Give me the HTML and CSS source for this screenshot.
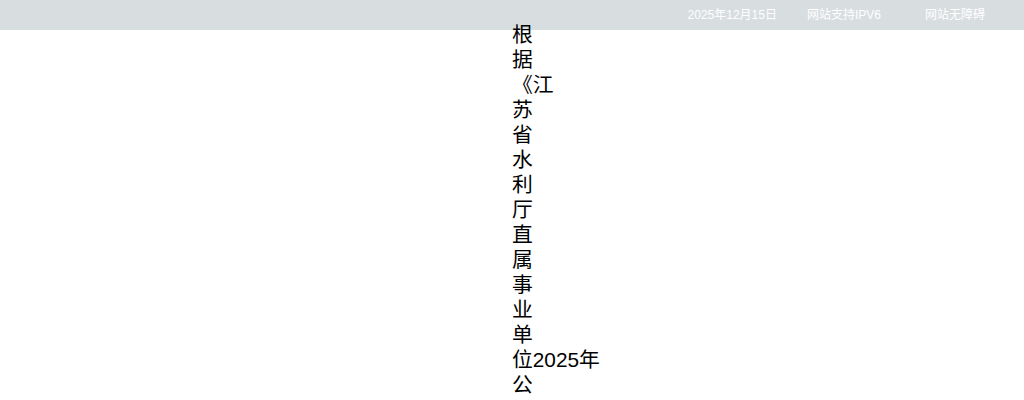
FILE: index.html
```html
<!DOCTYPE html>
<html lang="zh-CN">
<head>
<meta charset="utf-8">
<title>江苏省水利厅</title>
<link rel="stylesheet" href="styles.css">
</head>
<body>
<div class="topbar">
  <div class="topbar-inner">
    <span class="top-item date">2025年12月15日</span>
    <span class="top-item ipv6">网站支持IPV6</span>
    <span class="top-item access">网站无障碍</span>
  </div>
</div>
<div class="article">
  <p class="article-text">根据《江苏省水利厅直属事业单<span class="nobreak">位2025年</span>公开招聘工作人员公告》要求，现将拟聘用人员名单予以公示。</p>
</div>
</body>
</html>
```
FILE: styles.css
```css
html, body {
  margin: 0;
  padding: 0;
  background: #ffffff;
}
body {
  font-family: "Liberation Sans", Arial, "Noto Sans CJK SC", sans-serif;
  overflow: hidden;
  height: 400px;
}
.topbar {
  height: 30px;
  background: #d8dde0;
}
.topbar-inner {
  display: flex;
  justify-content: flex-end;
  align-items: center;
  height: 30px;
  padding-right: 39px;
  font-size: 12px;
  color: #ffffff;
}
.top-item {
  line-height: 26px;
}
.date {
  margin-right: 30px;
}
.ipv6 {
  margin-right: 44px;
}
.article {
  margin-top: -8px;
  margin-left: 512px;
  width: 0;
  position: relative;
}
.article-text {
  margin: 0;
  font-size: 20.8px;
  line-height: 25px;
  color: #000000;
}
.nobreak {
  white-space: nowrap;
}
```
